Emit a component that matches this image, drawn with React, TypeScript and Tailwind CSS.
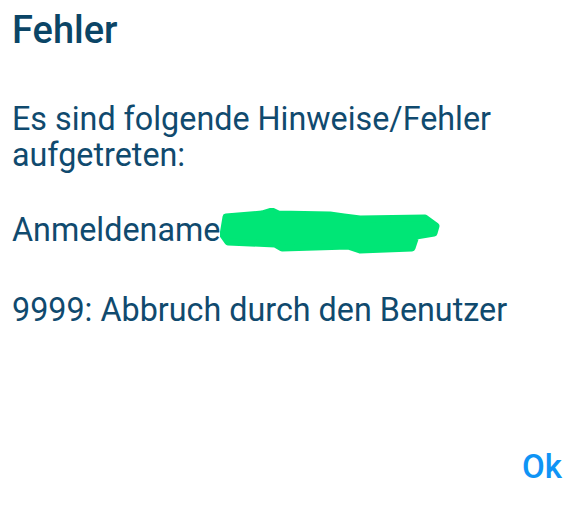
const Scribble = () => (
  <svg width="222" height="48" viewBox="0 0 222 48" className="absolute left-[208px] top-[-4px]">
    <path
      d="M6 9 L42 6 L52 3 L58 6 L110 7 L124 9 L140 11 L205 10 L216 18 L214 25 L196 28 L192 40 L140 42 L128 38 L62 40 L55 36 L8 34 L3 27 Z"
      fill="#00e676"
      stroke="#00e676"
      strokeWidth="7"
      strokeLinejoin="round"
    />
  </svg>
);

const App = () => {
  return (
    <div className="w-[587px] h-[509px] bg-white font-['Roboto',sans-serif] pl-3 pr-[25px] pt-[8px] text-[#104a6e]">
      <h1 className="text-[38px] leading-[44px] font-medium text-[#0b4566]">Fehler</h1>
      <p className="mt-[49px] text-[32.3px] leading-[36px]">
        Es sind folgende Hinweise/Fehler
        <br />
        aufgetreten:
      </p>
      <p className="relative mt-[39px] text-[32.3px] leading-[36px]">
        Anmeldename
        <Scribble />
      </p>
      <p className="mt-[44px] text-[32.3px] leading-[36px]">9999: Abbruch durch den Benutzer</p>
      <div className="mt-[121px] flex justify-end">
        <button className="text-[33px] leading-[36px] font-medium text-[#0f94f5]">Ok</button>
      </div>
    </div>
  );
};

export default App;
